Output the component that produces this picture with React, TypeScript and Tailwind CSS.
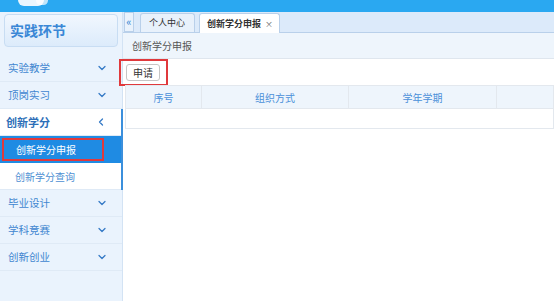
import { ChevronDown, ChevronLeft } from "lucide-react"

const font = { fontFamily: '"Noto Sans CJK SC", "Liberation Sans", sans-serif' }

function MenuRow({ label, open }: { label: string; open?: boolean }) {
  return (
    <div
      className={`h-[27px] flex items-center justify-between pr-[14px] border-b border-[#dfeaf6] ${
        open ? "bg-white text-[#2d6fb8] font-bold text-[11px] pl-[6px]" : "text-[#3f86d0] text-[10.5px] pl-[8px]"
      }`}
    >
      <span>{label}</span>
      {open ? (
        <ChevronLeft size={12} strokeWidth={2.5} className="text-[#3479c6]" />
      ) : (
        <ChevronDown size={12} strokeWidth={2.5} className="text-[#3479c6]" />
      )}
    </div>
  )
}

export default function App() {
  return (
    <div className="w-[554px] h-[301px] overflow-hidden bg-white flex flex-col" style={font}>
      <div className="h-[12px] bg-[#2aa8f1] relative shrink-0">
        <div className="absolute left-[18px] top-[-6px] w-[26px] h-[12px] rounded-full bg-white/90" />
        <div className="absolute left-[36px] top-[-4px] w-[12px] h-[9px] rounded-full bg-white/70" />
      </div>
      <div className="flex flex-1 min-h-0">
        <div className="w-[123px] shrink-0 bg-[#eaf3fd] border-r border-[#d3e3f4]">
          <div className="mx-[4px] mt-[2px] h-[33px] rounded-[4px] border border-[#c8ddf3] bg-gradient-to-b from-[#f1f7fe] to-[#dcebfb] flex items-center pl-[5px] text-[14px] font-bold text-[#3a87d6]">
            实践环节
          </div>
          <div className="mt-[8px]">
            <MenuRow label="实验教学" />
            <MenuRow label="顶岗实习" />
            <div className="border-r-2 border-[#3b8fdc] mr-[-1px]">
              <MenuRow label="创新学分" open />
              <div className="h-[27px] bg-[#1f8be3] flex items-center px-[2px]">
                <div className="w-[102px] h-[23px] border-2 border-[#e0393c] flex items-center pl-[12px] text-[10px] text-white">
                  创新学分申报
                </div>
              </div>
              <div className="h-[27px] bg-white flex items-center pl-[15px] text-[10px] text-[#4d8fd3] border-b border-[#dfeaf6]">
                创新学分查询
              </div>
            </div>
            <MenuRow label="毕业设计" />
            <MenuRow label="学科竞赛" />
            <MenuRow label="创新创业" />
          </div>
        </div>
        <div className="flex-1 flex flex-col min-w-0">
          <div className="h-[21px] bg-[#dceafa] border-b border-[#b9d0ea] flex items-end pl-[1px] shrink-0">
            <div className="w-[10px] h-[20px] mb-[0px] border border-[#b9d0ea] bg-[#e9f2fc] text-[#2f7fd0] text-[11px] leading-[16px] text-center">
              «
            </div>
            <div className="ml-[6px] h-[19px] pl-[8px] pr-[9px] border border-b-0 border-[#b9d0ea] rounded-t-[3px] bg-[#e8f1fb] text-[9px] text-[#333] flex items-center">
              个人中心
            </div>
            <div className="ml-[4px] h-[20px] mb-[-1px] pl-[7px] pr-[6px] border border-b-0 border-[#b9d0ea] rounded-t-[3px] bg-white text-[9px] font-bold text-[#333] flex items-center gap-[4px]">
              创新学分申报
              <span className="font-normal text-[#666] text-[8px]">×</span>
            </div>
          </div>
          <div className="h-[26px] bg-[#eef5fc] border-b border-[#dfe6ee] flex items-center pl-[9px] text-[10px] text-[#555] shrink-0">
            创新学分申报
          </div>
          <div className="ml-[-4px] pt-[0px]">
            <div className="w-[49px] h-[27px] border-2 border-[#e0393c] flex items-center pl-[5px]">
              <div className="w-[34px] h-[17px] border border-[#c6c6c6] rounded-[3px] bg-white text-[10px] text-[#333] flex items-center justify-center">
                申请
              </div>
            </div>
          </div>
          <div className="ml-[2px] mt-[-1px] border border-[#e3e8ee]">
            <div className="h-[23px] bg-[#eef5fc] flex text-[10px] text-[#4a90d9] border-b border-[#e3e8ee]">
              <div className="w-[76px] flex items-center justify-center border-r border-[#e3e8ee]">序号</div>
              <div className="w-[147px] flex items-center justify-center border-r border-[#e3e8ee]">组织方式</div>
              <div className="w-[148px] flex items-center justify-center border-r border-[#e3e8ee]">学年学期</div>
              <div className="flex-1" />
            </div>
            <div className="h-[19px]" />
          </div>
        </div>
      </div>
    </div>
  )
}
